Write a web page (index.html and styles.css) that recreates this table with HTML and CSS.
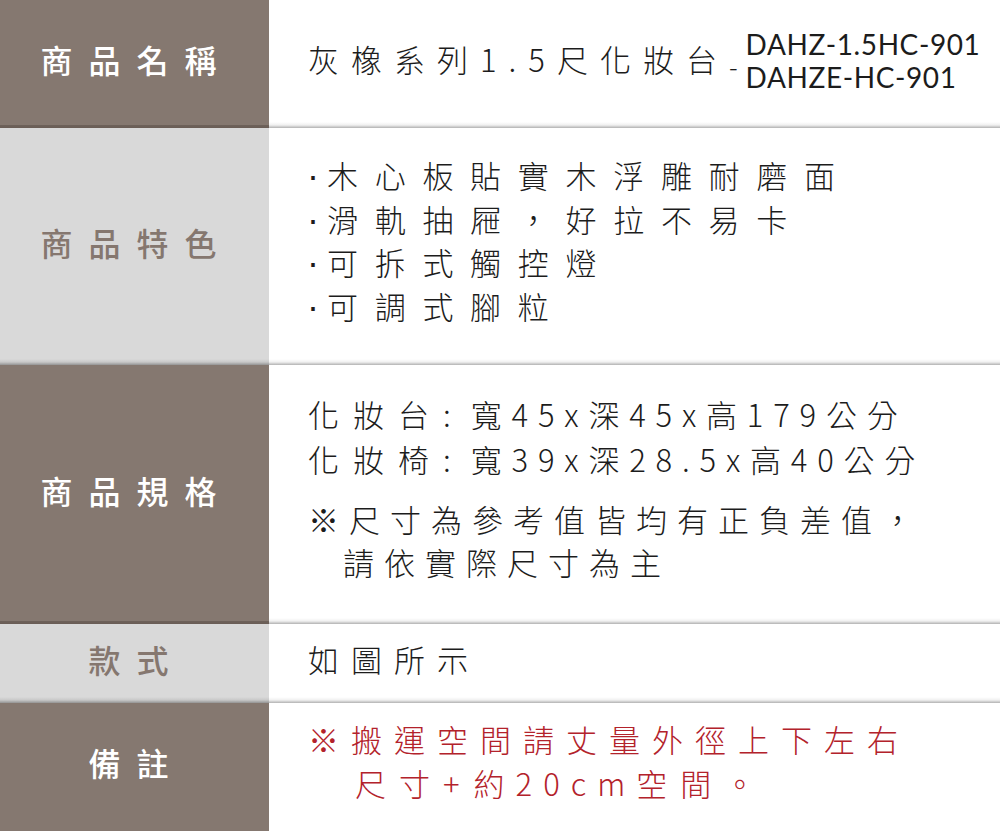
FILE: index.html
```html
<!DOCTYPE html>
<html lang="zh-Hant">
<head>
<meta charset="utf-8">
<title>商品資訊</title>
<link rel="stylesheet" href="styles.css">
</head>
<body>
<div class="sheet">
  <div class="row r1">
    <div class="label dark sep">商品名稱</div>
    <div class="content sep">
      <div class="name-line">
        <span class="name">灰橡系列1.5尺化妝台</span><span class="dash">-</span>
        <div class="codes">
          <div class="code">DAHZ-1.5HC-901</div>
          <div class="code">DAHZE-HC-901</div>
        </div>
      </div>
    </div>
  </div>
  <div class="row r2">
    <div class="label light sep">商品特色</div>
    <div class="content sep">
      <div class="features">
        <div class="feat"><span class="dot">·</span>木心板貼實木浮雕耐磨面</div>
        <div class="feat"><span class="dot">·</span>滑軌抽屜，好拉不易卡</div>
        <div class="feat"><span class="dot">·</span>可拆式觸控燈</div>
        <div class="feat"><span class="dot">·</span>可調式腳粒</div>
      </div>
    </div>
  </div>
  <div class="row r3">
    <div class="label dark sep">商品規格</div>
    <div class="content sep">
      <div class="spec">
        <div class="spec-line"><span class="wide">化妝台</span><span class="colon">:</span><span class="dims">寬45x深45x高179公分</span></div>
        <div class="spec-line"><span class="wide">化妝椅</span><span class="colon">:</span><span class="dims">寬39x深28.5x高40公分</span></div>
        <div class="note">
          <div>※尺寸為參考值皆均有正負差值，</div>
          <div class="indent">請依實際尺寸為主</div>
        </div>
      </div>
    </div>
  </div>
  <div class="row r4">
    <div class="label light sep">款式</div>
    <div class="content sep">
      <div class="style-text">如圖所示</div>
    </div>
  </div>
  <div class="row r5">
    <div class="label dark">備註</div>
    <div class="content">
      <div class="remark">
        <div>※搬運空間請丈量外徑上下左右</div>
        <div class="indent2">尺寸<span class="plus">+</span><span class="num">約20cm</span>空間。</div>
      </div>
    </div>
  </div>
</div>
</body>
</html>
```

FILE: styles.css
```css
html, body {
  margin: 0;
  padding: 0;
  background: #ffffff;
}

body {
  font-family: "Noto Sans CJK TC", "Noto Sans", sans-serif;
  color: #1c1c1c;
}

.sheet {
  width: 1000px;
  height: 831px;
  display: flex;
  flex-direction: column;
  overflow: hidden;
}

.row {
  display: grid;
  grid-template-columns: 269px 1fr;
}

.r1 { height: 128px; }
.r2 { height: 237px; }
.r3 { height: 259px; }
.r4 { height: 79px; }
.r5 { height: 128px; }

.label {
  display: flex;
  align-items: center;
  justify-content: center;
  font-size: 32px;
  font-weight: 500;
  letter-spacing: 16px;
  padding-left: 4px;
  padding-bottom: 10px;
}

.dark {
  background-color: #857870;
  color: #ffffff;
}

.light {
  background-color: #d9d9d9;
  color: #85776f;
}

.content {
  display: flex;
  align-items: center;
  padding-left: 39px;
  padding-bottom: 3px;
  background-color: #ffffff;
  font-size: 31px;
  font-weight: 300;
  white-space: nowrap;
  min-width: 0;
}

.dark.sep {
  background-image: linear-gradient(to bottom, rgba(0,0,0,0) calc(100% - 3px), rgba(40,30,25,0.25) calc(100% - 3px), rgba(40,30,25,0.3) 100%);
}

.light.sep {
  background-image: linear-gradient(to bottom, rgba(0,0,0,0) calc(100% - 6px), rgba(0,0,0,0.08) calc(100% - 3px), rgba(0,0,0,0.32) 100%);
}

.content.sep {
  background-image: linear-gradient(to bottom, rgba(0,0,0,0) calc(100% - 6px), rgba(0,0,0,0.06) calc(100% - 3px), rgba(0,0,0,0.3) 100%);
}

/* row 1 */
.name-line {
  display: flex;
  align-items: center;
  margin-top: -8px;
  flex-wrap: nowrap;
}

.name {
  letter-spacing: 12px;
  flex-shrink: 0;
}

.dash {
  font-size: 26px;
  line-height: 26px;
  margin-left: 0;
  margin-top: 14px;
  flex-shrink: 0;
}

.codes {
  margin-left: 8px;
  margin-top: 4px;
  font-family: "Lato", "Open Sans", sans-serif;
  font-size: 28px;
  font-weight: 400;
  letter-spacing: 0.6px;
  flex-shrink: 0;
}

.code {
  height: 33px;
  line-height: 33px;
}

/* row 2 */
.features {
  letter-spacing: 16.7px;
  margin-top: -10px;
}

.feat {
  height: 43.5px;
  line-height: 43.5px;
}

.dot {
  display: inline-block;
  width: 20px;
  margin-left: -2px;
  padding-left: 1px;
  font-family: "Liberation Sans", sans-serif;
  font-size: 36px;
  font-weight: 400;
  letter-spacing: 0;
  line-height: 1;
}

/* row 3 */
.spec {
  line-height: 45px;
  margin-top: -12px;
}

.wide {
  letter-spacing: 14px;
}

.colon {
  letter-spacing: 20px;
}

.dims {
  letter-spacing: 9.8px;
}

.note {
  margin-top: 16px;
  line-height: 43px;
  letter-spacing: 10px;
}

.indent {
  padding-left: 35px;
}

/* row 4 */
.style-text {
  letter-spacing: 12px;
  margin-top: -8px;
}

/* row 5 */
.remark {
  color: #b3222b;
  line-height: 44px;
  letter-spacing: 12px;
  margin-top: -10px;
}

.indent2 {
  padding-left: 47px;
  letter-spacing: 13px;
}

.plus {
  letter-spacing: 14px;
}

.num {
  letter-spacing: 11px;
}
```
